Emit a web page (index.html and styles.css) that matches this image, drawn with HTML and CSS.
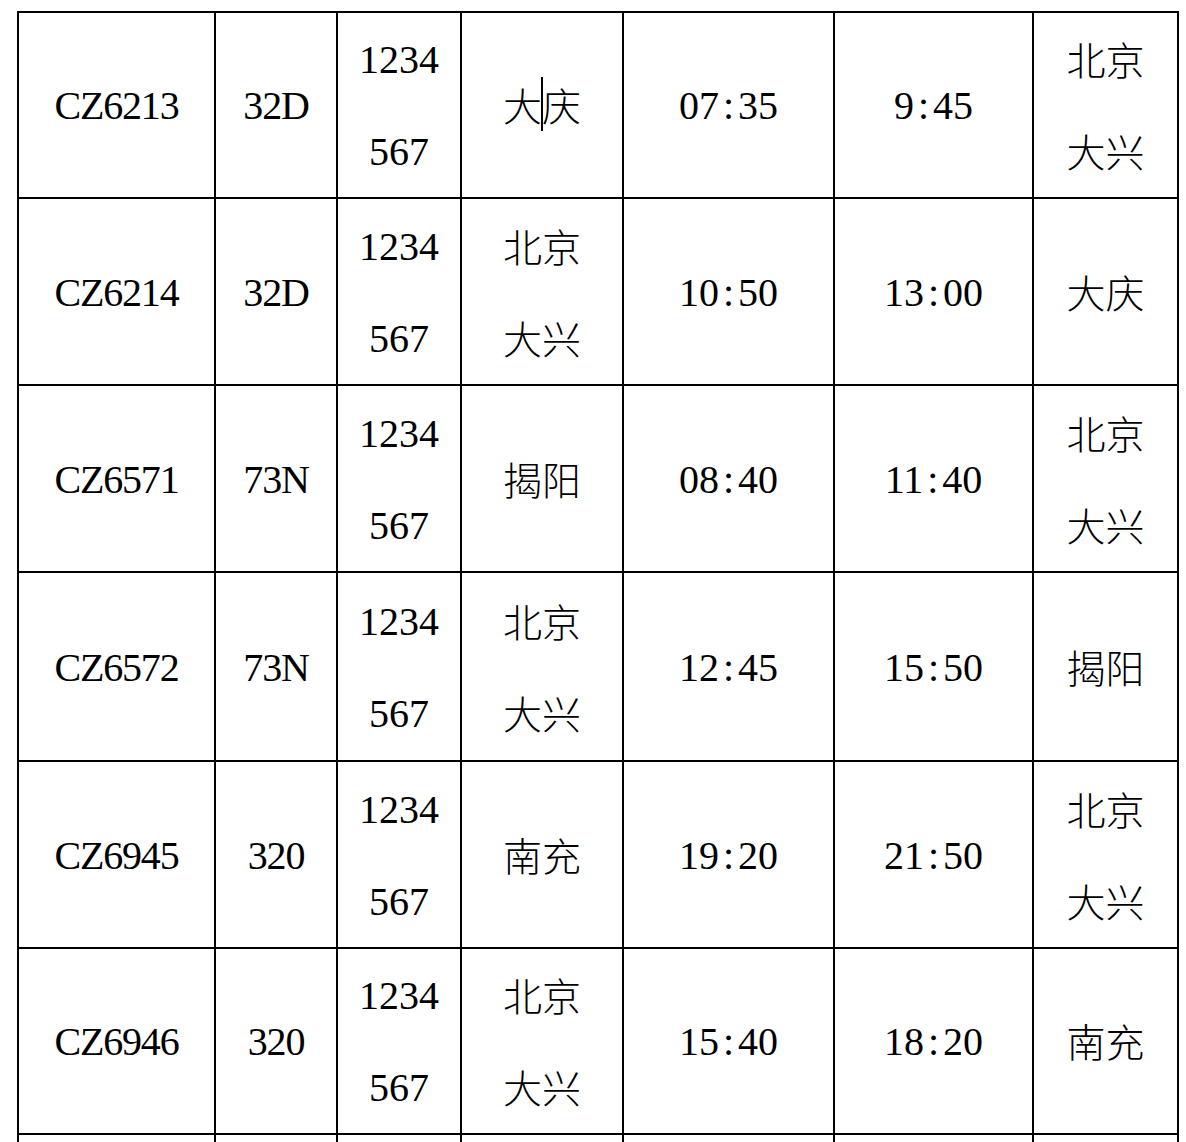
FILE: index.html
```html
<!DOCTYPE html>
<html lang="zh-CN">
<head>
<meta charset="utf-8">
<title>航班时刻表</title>
<link rel="stylesheet" href="styles.css">
</head>
<body>
<div class="sheet">
  <div class="cell code">CZ6213</div><div class="cell code">32D</div><div class="cell">1234<br>567</div><div class="cell cjk">大<span class="caret"></span>庆</div><div class="cell">07<span class="colon">:</span>35</div><div class="cell">9<span class="colon">:</span>45</div><div class="cell cjk">北京<br>大兴</div>
  <div class="cell code">CZ6214</div><div class="cell code">32D</div><div class="cell">1234<br>567</div><div class="cell cjk">北京<br>大兴</div><div class="cell">10<span class="colon">:</span>50</div><div class="cell">13<span class="colon">:</span>00</div><div class="cell cjk">大庆</div>
  <div class="cell code">CZ6571</div><div class="cell code">73N</div><div class="cell">1234<br>567</div><div class="cell cjk">揭阳</div><div class="cell">08<span class="colon">:</span>40</div><div class="cell">11<span class="colon">:</span>40</div><div class="cell cjk">北京<br>大兴</div>
  <div class="cell code">CZ6572</div><div class="cell code">73N</div><div class="cell">1234<br>567</div><div class="cell cjk">北京<br>大兴</div><div class="cell">12<span class="colon">:</span>45</div><div class="cell">15<span class="colon">:</span>50</div><div class="cell cjk">揭阳</div>
  <div class="cell code">CZ6945</div><div class="cell code">320</div><div class="cell">1234<br>567</div><div class="cell cjk">南充</div><div class="cell">19<span class="colon">:</span>20</div><div class="cell">21<span class="colon">:</span>50</div><div class="cell cjk">北京<br>大兴</div>
  <div class="cell code">CZ6946</div><div class="cell code">320</div><div class="cell">1234<br>567</div><div class="cell cjk">北京<br>大兴</div><div class="cell">15<span class="colon">:</span>40</div><div class="cell">18<span class="colon">:</span>20</div><div class="cell cjk">南充</div>
  <div class="cell"></div><div class="cell"></div><div class="cell"></div><div class="cell"></div><div class="cell"></div><div class="cell"></div><div class="cell"></div>
</div>
</body>
</html>
```
FILE: styles.css
```css
html, body {
  margin: 0;
  padding: 0;
  background: #ffffff;
  overflow: hidden;
}

body {
  height: 1142px;
}

.sheet {
  margin: 11px 0 0 17px;
  display: grid;
  grid-template-columns: 197px 122px 124px 162px 211px 199px 145px;
  grid-template-rows: 186px 187px 187px 189px 187px 186px 187px;
  width: max-content;
  border-left: 2px solid #000;
  border-top: 2px solid #000;
  font-family: "Liberation Serif", "Noto Sans CJK SC", serif;
  font-size: 40px;
  color: #000;
}

.cell {
  box-sizing: border-box;
  border-right: 2px solid #000;
  border-bottom: 2px solid #000;
  display: flex;
  align-items: center;
  justify-content: center;
  text-align: center;
  line-height: 92px;
  padding-top: 2px;
}

.code {
  letter-spacing: -1.2px;
}

.cjk {
  font-family: "Noto Sans CJK SC", sans-serif;
  font-weight: 300;
  font-size: 39px;
  padding-top: 0;
  padding-bottom: 2px;
}

.colon {
  padding: 0 4px;
}

.caret {
  display: inline-block;
  width: 0;
  height: 54px;
  border-left: 2px solid #000;
  vertical-align: middle;
  margin: 0 -1px;
}
```
